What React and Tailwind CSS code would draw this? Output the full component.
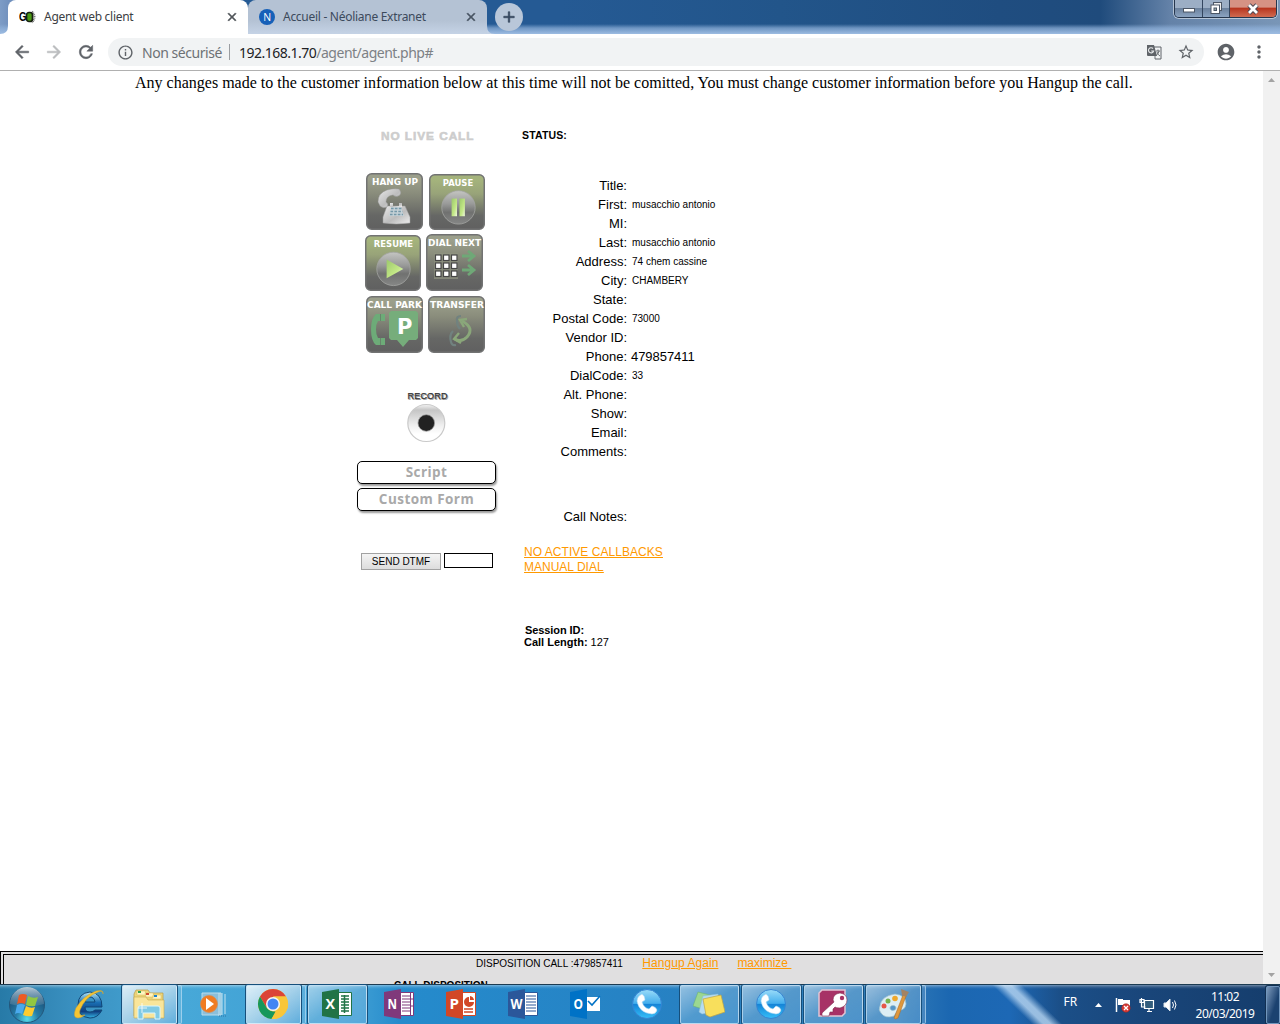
import React from "react";
import {
  MdArrowBack,
  MdArrowForward,
  MdRefresh,
  MdInfoOutline,
  MdStarBorder,
  MdAccountCircle,
  MdMoreVert,
  MdClose,
  MdAdd,
} from "react-icons/md";

function TabFoot({ flip, color }) {
  return (
    <svg className={flip ? "h-2 w-2 -scale-x-100" : "h-2 w-2"} viewBox="0 0 8 8">
      <path d="M8 0V8H0Q8 8 8 0Z" fill={color} />
    </svg>
  );
}

function TranslateIcon() {
  return (
    <svg className="h-[16px] w-[16px]" viewBox="0 0 16 16">
      <path d="M6 3h9v12H9" fill="#f1f3f4" stroke="#5f6368" />
      <path d="M1 1h7l3 11H2a1 1 0 0 1-1-1Z" fill="#5f6368" />
      <path d="M7 4.5A2.6 2.6 0 1 0 7.6 7H5.2" fill="none" stroke="#e8eaec" strokeWidth="1.1" />
      <path d="M10 7h4M12 5.5V7m1 0q-.5 3-2.5 4M11 8q1 3 3 4M9 12v3" fill="none" stroke="#5f6368" strokeWidth=".9" />
    </svg>
  );
}

function WindowControls() {
  return (
    <div className="flex h-[18px] w-[103px] overflow-hidden rounded-b-[5px] border border-t-0 border-[#26364d] shadow-[0_0_0_1px_rgba(255,255,255,0.5)]">
      <div className="flex w-[28px] items-center justify-center border-r border-[#34465f] bg-linear-to-b from-[#9caec5] from-45% via-[#6c829e] via-50% to-[#8ba3c1]">
        <svg className="h-3 w-3" viewBox="0 0 12 12"><rect x=".5" y="5.500" width="11" height="3.500" fill="#fff" stroke="#4c5666" /></svg>
      </div>
      <div className="flex w-[27px] items-center justify-center border-r border-[#34465f] bg-linear-to-b from-[#9caec5] from-45% via-[#6c829e] via-50% to-[#8ba3c1]">
        <svg className="h-[13px] w-[13px]" viewBox="0 0 13 13">
          <rect x="3.500" y=".5" width="8" height="8" fill="#eee" stroke="#4c5666" />
          <rect x="1" y="3" width="8.500" height="8.500" fill="#fff" stroke="#4c5666" />
          <rect x="4" y="6" width="2.500" height="2.500" fill="#9aa" stroke="#4c5666" />
        </svg>
      </div>
      <div className="flex flex-1 items-center justify-center bg-linear-to-b from-[#d69284] from-40% via-[#b83620] via-50% to-[#d06a50]">
        <svg className="h-[12px] w-[14px]" viewBox="0 0 14 12">
          <path d="M3 2l8 8M11 2l-8 8" stroke="#4c4652" strokeWidth="4.600" />
          <path d="M3 2l8 8M11 2l-8 8" stroke="#fff" strokeWidth="2.800" />
        </svg>
      </div>
    </div>
  );
}

function TabStrip() {
  return (
    <div className="flex h-[34px] items-end bg-[linear-gradient(to_bottom,transparent_24px,#8fb1dab0_28px,#9dbce2_34px),linear-gradient(to_right,#7d9cc6_0,#7090bd_10px,#255a94_240px,#255a94_560px,#22558a_780px,#1f4d80_1000px,#1f4b7c_1100px,#6482a8_1170px,#7996b7_1280px)]">
      <TabFoot color="#fff" />
      <div className="flex h-[34px] w-[240px] items-center rounded-t-lg bg-white pr-[9px] pl-[11px]">
        <svg className="h-4 w-[17px]" viewBox="0 0 17 16">
          <path d="M13 2.500q5 5.500 0 11" fill="none" stroke="#777" strokeWidth="2" strokeDasharray="1 .7" />
          <rect x="7.500" y="3.500" width="6" height="9" rx="2.500" fill="#4b9b14" stroke="#172010" strokeWidth="1.700" />
          <text x="0" y="12.300" fontFamily="Liberation Sans" fontWeight="bold" fontSize="12" textLength="7.500" lengthAdjust="spacingAndGlyphs">G</text>
        </svg>
        <span className="ml-[8px] text-[12px] tracking-[-0.28px] text-[#3c4043]">Agent web client</span>
        <MdClose className="ml-auto h-[14px] w-[14px] text-[#4e5257] [&>path:last-child]:stroke-current [&>path:last-child]:stroke-1" />
      </div>
      <div className="flex h-[34px] w-[239px] items-center rounded-t-lg bg-linear-to-b from-[#b4c2d4] from-60% to-[#c5d3e6] pr-[9px] pl-[11px]">
        <svg className="h-4 w-4" viewBox="0 0 16 16">
          <circle cx="8" cy="8" r="8" fill="#1660b8" />
          <text x="4.300" y="11.700" fill="#fff" fontFamily="Open Sans" fontSize="10.500">N</text>
        </svg>
        <span className="ml-[8px] text-[12px] tracking-[-0.28px] text-[#3c4a5c]">Accueil - Néoliane Extranet</span>
        <MdClose className="ml-auto h-[14px] w-[14px] text-[#465261] [&>path:last-child]:stroke-current [&>path:last-child]:stroke-1" />
      </div>
      <TabFoot flip color="#c5d3e6" />
      <div className="mb-[3px] flex h-7 w-7 items-center justify-center rounded-full bg-[#b9c7d9]">
        <MdAdd className="h-[18px] w-[18px] text-[#34465c] [&>path:last-child]:stroke-current [&>path:last-child]:stroke-[0.8]" />
      </div>
      <div className="ml-auto self-start pr-[3px]"><WindowControls /></div>
    </div>
  );
}

function Toolbar() {
  return (
    <div className="flex h-[37px] items-center border-b border-[#b0b0b0] bg-white pl-[12px] text-[#5f6368]">
      <MdArrowBack className="h-5 w-5 [&>path:last-child]:stroke-current [&>path:last-child]:stroke-[0.6]" />
      <MdArrowForward className="ml-[12px] h-5 w-5 text-[#babcbe] [&>path:last-child]:stroke-current [&>path:last-child]:stroke-[0.6]" />
      <MdRefresh className="ml-[12px] h-5 w-5 [&>path:last-child]:stroke-current [&>path:last-child]:stroke-[0.6]" />
      <div className="ml-[12px] flex h-7 w-[1096px] items-center rounded-full bg-[#f1f3f4] pl-[9px]">
        <MdInfoOutline className="h-[17px] w-[17px]" />
        <span className="ml-[8px] text-[14px] tracking-[-0.45px] text-[#6d7175]">Non sécurisé</span>
        <span className="ml-[7px] h-4 w-px bg-[#9a9da1]" />
        <span className="ml-[9px] text-[14px] tracking-[-0.5px] text-[#7d8185]"><span className="text-[#202124]">192.168.1.70</span>/agent/agent.php#</span>
        <div className="ml-auto flex items-center gap-[15px] pr-[9px]">
          <TranslateIcon />
          <MdStarBorder className="h-[18px] w-[18px]" />
        </div>
      </div>
      <MdAccountCircle className="ml-[12px] h-5 w-5" />
      <MdMoreVert className="ml-[13px] h-5 w-5" />
    </div>
  );
}

function PadButton({ label, top = 12, x = 5, width, green, children }) {
  const id = "pad" + label.replace(" ", "");
  return (
    <svg className={green ? "mt-px h-[56px] w-[56px] shrink-0" : "h-[57px] w-[57px] shrink-0"} viewBox="0 0 57 57">
      <defs>
        <linearGradient id={id} x1="0" y1="0" x2="0" y2="1">
          <stop offset=".1" stopColor={green ? "#a4b37c" : "#9b9f8b"} />
          <stop offset=".35" stopColor={green ? "#98a379" : "#8a8d7c"} />
          <stop offset=".75" stopColor="#666765" />
          <stop offset="1" stopColor="#606060" />
        </linearGradient>
        <linearGradient id={id + "ball"} x1="0" y1="0" x2="0" y2="1">
          <stop offset="0" stopColor="#c4c5c2" />
          <stop offset=".4" stopColor="#989998" />
          <stop offset=".65" stopColor="#707170" />
          <stop offset="1" stopColor="#868786" />
        </linearGradient>
        <linearGradient id={id + "lime"} x1="0" y1="0" x2="1" y2="1">
          <stop offset="0" stopColor="#9cc86c" />
          <stop offset=".6" stopColor="#c3e886" />
          <stop offset="1" stopColor="#eef8dc" />
        </linearGradient>
        <linearGradient id={id + "silver"} x1="0" y1="0" x2="1" y2="1">
          <stop offset="0" stopColor="#e9e9e9" />
          <stop offset=".55" stopColor="#bdbdbd" />
          <stop offset="1" stopColor="#efefef" />
        </linearGradient>
      </defs>
      <rect x=".75" y=".75" width="55.500" height="55.500" rx="5" fill={`url(#${id})`} stroke="#727373" strokeWidth="1.500" />
      {children(id)}
      <text x={x} y={top} fill="#fff" fontFamily="DejaVu Sans" fontWeight="bold" fontSize="9.300" textLength={width} lengthAdjust="spacingAndGlyphs">{label}</text>
    </svg>
  );
}

function ControlPad() {
  return (
    <div className="mt-[29px] flex flex-col">
      <div className="flex gap-[6px] pl-[9px]">
        <PadButton label="HANG UP" x={6} width={46}>
          {(id) => (
            <g fill={`url(#${id}silver)`}>
              <path d="M21 33h18l5 11v6q-14 2-27 0v-6Z" stroke="#9c9c9c" strokeWidth=".5" />
              <path d="M24 34v-4h3v3h6v-3h3v4Z" />
              <path d="M12 29q0-9 9-12 7-2 12-1 3 3 1 6-4 3-7 0-7 1-7 7 3 2 1 5-4 2-7-1Z" stroke="#8f8f8f" strokeWidth=".4" />
              <path d="M25 34h10l3 9H23Z" fill="#c6d2d7" />
              <path d="M25 35.500h11M24.500 38.500h12M24 41.500h13" stroke="#7598a8" strokeWidth="1.500" strokeDasharray="2.600 1.300" />
            </g>
          )}
        </PadButton>
        <PadButton label="PAUSE" x={14} width={31} green>
          {(id) => (
            <g>
              <circle cx="30" cy="34" r="17" fill={`url(#${id}ball)`} stroke="#a3a4a2" strokeWidth=".8" />
              <rect x="23" y="25" width="5.500" height="18" fill={`url(#${id}lime)`} />
              <rect x="31" y="25" width="5.500" height="18" fill={`url(#${id}lime)`} />
            </g>
          )}
        </PadButton>
      </div>
      <div className="mt-[4px] flex gap-[5px] pl-[8px]">
        <PadButton label="RESUME" x={9} width={40} green>
          {(id) => (
            <g>
              <circle cx="29" cy="34.500" r="17" fill={`url(#${id}ball)`} stroke="#a3a4a2" strokeWidth=".8" />
              <path d="M22 25v19l17-9.500Z" fill={`url(#${id}lime)`} />
            </g>
          )}
        </PadButton>
        <PadButton label="DIAL NEXT" x={2} width={53}>
          {() => (
            <g>
              <rect x="8" y="19" width="24" height="26" fill="#929681" opacity=".7" />
              {[21, 29, 37].map((y) => [9.5, 17.5, 25.5].map((x) => (
                <rect key={`${x}-${y}`} x={x} y={y} width="5.500" height="5.500" fill="#fff" stroke="#464646" strokeWidth="1.200" />
              )))}
              <path d="M36 22h11m-5-5 6 5-6 5M36 36h11m-5-5 6 5-6 5" fill="none" stroke="#6fa877" strokeWidth="2.800" />
            </g>
          )}
        </PadButton>
      </div>
      <div className="mt-[5px] flex gap-[5px] pl-[9px]">
        <PadButton label="CALL PARK" x={1} width={55}>
          {() => (
            <g>
              <path d="M19 18v7h-7q-2 3-2 8.500t2 8.500h7v7h-9Q5 45 5 33.500T10 18Z" fill="#6dab78" />
              <path d="M14.500 18v7M14.500 42v7" stroke="#647466" strokeWidth=".7" />
              <path d="M25 15h25l2 2v25l-2 2h-7l-6 7-6-7h-6l-2-2V17Z" fill="#76ad7b" />
              <text x="31" y="37.500" fill="#fff" fontFamily="DejaVu Sans" fontWeight="bold" fontSize="21">P</text>
            </g>
          )}
        </PadButton>
        <PadButton label="TRANSFER" x={2} width={54}>
          {() => (
            <g fill="none" strokeWidth="2.400">
              <path d="M33 20q-5 0-4 5 0 5 3 8" stroke="#71827f" strokeWidth="2.200" />
              <path d="M34 25q13 7 5 16-6 6-12 2" stroke="#8aa77a" strokeWidth="3" />
              <path d="M39 23l-7 1 4 7M31 37l-5 6 7 4" stroke="#8aa77a" />
              <path d="M25 35q-4 4-2 11 1 4 5 3" stroke="#71827f" strokeWidth="2.200" />
            </g>
          )}
        </PadButton>
      </div>
    </div>
  );
}

function RecordButton() {
  return (
    <svg className="mt-[37px] ml-[45px] h-[54px] w-[52px]" viewBox="0 0 52 54">
      <defs>
        <linearGradient id="recordShine" x1="0" y1="0" x2="0" y2="1">
          <stop offset="0" stopColor="#f4f4f4" /><stop offset=".15" stopColor="#c5c5c5" /><stop offset=".55" stopColor="#eee" /><stop offset=".8" stopColor="#fff" />
        </linearGradient>
      </defs>
      <text x="6.500" y="9.700" fill="#aaa" fontFamily="Liberation Sans" fontWeight="bold" fontSize="9" textLength="40">RECORD</text>
      <text x="5.500" y="8.700" fill="#343434" stroke="#343434" strokeWidth=".25" fontFamily="Liberation Sans" fontSize="9" textLength="40">RECORD</text>
      <circle cx="24.300" cy="33" r="18.500" fill="url(#recordShine)" stroke="#c9c9c9" strokeWidth="1.200" />
      <circle cx="24.300" cy="33" r="8.300" fill="#222" stroke="#999" strokeWidth=".7" />
    </svg>
  );
}

function FormButton({ children }) {
  return (
    <div className="flex h-[23px] w-[139px] items-center justify-center rounded-[5px] border border-black bg-white shadow-[1px_2px_2px_rgba(0,0,0,0.4)]">
      <span className="pt-px font-['Open_Sans'] text-[13.5px] leading-none font-bold tracking-[0.45px] text-[#a9a9a9]">{children}</span>
    </div>
  );
}

const fields = [
  ["Title:"],
  ["First:", "musacchio antonio"],
  ["MI:"],
  ["Last:", "musacchio antonio"],
  ["Address:", "74 chem cassine"],
  ["City:", "CHAMBERY"],
  ["State:"],
  ["Postal Code:", "73000"],
  ["Vendor ID:"],
  ["Phone:", "479857411"],
  ["DialCode:", "33"],
  ["Alt. Phone:"],
  ["Show:"],
  ["Email:"],
  ["Comments:"],
];

function CustomerPanel() {
  return (
    <div className="ml-[25px] flex flex-col font-['Liberation_Sans'] text-[13px] text-black">
      <div className="pt-[3px] text-[10.5px] leading-3 font-bold tracking-[0.15px]">STATUS:</div>
      <div className="mt-[35px]">
        {fields.map(([label, value]) => (
          <div key={label} className="flex h-[19px] items-center">
            <span className="w-[105px] text-right">{label}</span>
            <span className={label === "Phone:" ? "ml-[4px] tracking-[-0.05px]" : "ml-[5px] text-[10px]"}>{value}</span>
          </div>
        ))}
      </div>
      <div className="mt-[46px] flex h-[19px] w-[105px] items-center justify-end">Call Notes:</div>
      <div className="mt-[19px] ml-[2px] flex flex-col items-start text-[12px] leading-[15px] text-[#ff9900] underline">
        <a className="tracking-[0.04px]">NO ACTIVE CALLBACKS</a>
        <a>MANUAL DIAL</a>
      </div>
      <div className="mt-[49px] ml-[2px] text-[11px] leading-3">
        <div className="ml-px font-bold tracking-[-0.08px]">Session ID:</div>
        <div><b>Call Length:</b> 127</div>
      </div>
    </div>
  );
}

function PageBody() {
  return (
    <div className="flex h-[913px] bg-white">
      <main className="flex w-[1263px] flex-col overflow-hidden">
        <p className="h-[55px] shrink-0 pl-[135px] font-['Liberation_Serif'] text-[16px] leading-[24px] tracking-[0.007px] whitespace-nowrap text-black">Any changes made to the customer information below at this time will not be comitted, You must change customer information before you Hangup the call.</p>
        <div className="flex h-[825px] shrink-0 pl-[357px]">
          <div className="flex w-[140px] flex-col">
            <svg className="mt-[2px] ml-[22px] h-4 w-[98px]" viewBox="0 0 98 16">
              <text x="2" y="11.800" fill="#cdcdcd" stroke="#cdcdcd" strokeWidth=".6" fontFamily="Liberation Sans" fontWeight="bold" fontSize="11.800" textLength="92.500">NO LIVE CALL</text>
            </svg>
            <ControlPad />
            <RecordButton />
            <div className="mt-[17px] flex flex-col gap-[4px]">
              <FormButton>Script</FormButton>
              <FormButton>Custom Form</FormButton>
            </div>
            <div className="mt-[42px] flex items-start gap-[3px] pl-[4px]">
              <button className="h-[17px] w-[80px] border border-[#a2a2a2] bg-linear-to-b from-[#f4f4f4] to-[#dddddd] pt-px font-['Liberation_Sans'] text-[10px] leading-none text-black">SEND DTMF</button>
              <span className="h-[15px] w-[49px] border border-black bg-white" />
            </div>
          </div>
          <CustomerPanel />
        </div>
        <section className="flex h-[60px] shrink-0 flex-col border-4 border-r-0 border-double border-black bg-[#e0dfe0] font-['Liberation_Sans']">
          <div className="flex h-[17px] shrink-0 items-center pl-[472px]">
            <span className="text-[10px] text-black">DISPOSITION CALL :479857411</span>
            <a className="mb-px ml-[19.5px] text-[12px] tracking-[0.06px] text-[#ff9900] underline">Hangup Again</a>
            <a className="mb-px ml-[19px] text-[12px] whitespace-pre text-[#ff9900] underline">maximize </a>
          </div>
          <div className="mt-[8px] pl-[390px] text-[10px] leading-3 font-bold text-black">CALL DISPOSITION</div>
        </section>
      </main>
      <aside className="flex w-[17px] flex-col items-center justify-between bg-[#f1f1f1] pt-[7px] pb-[7px]">
        <svg className="h-1 w-[7px]" viewBox="0 0 7 4"><path d="M0 4 3.500 0 7 4Z" fill="#a3a3a3" /></svg>
        <svg className="h-1 w-[7px]" viewBox="0 0 7 4"><path d="M0 0h7L3.500 4Z" fill="#a3a3a3" /></svg>
      </aside>
    </div>
  );
}

function StartOrb() {
  return (
    <svg className="h-[38px] w-[38px]" viewBox="0 0 38 38">
      <defs>
        <radialGradient id="orb" cx=".5" cy=".9" r=".8"><stop offset="0" stopColor="#55ddeb" /><stop offset=".4" stopColor="#277da7" /><stop offset="1" stopColor="#174a73" /></radialGradient>
        <linearGradient id="orbShine" x1="0" y1="0" x2="0" y2="1"><stop offset="0" stopColor="#dfebf1" stopOpacity=".8" /><stop offset="1" stopColor="#8aa5b8" stopOpacity=".2" /></linearGradient>
      </defs>
      <circle cx="19" cy="19" r="17.500" fill="url(#orb)" stroke="#24577b" />
      <path d="M2 18a17 17 0 0 1 34 0q-17 5-34 0Z" fill="url(#orbShine)" />
      <path d="M11 9q4-2 8 0l-2 9q-4-2-8 0Z" fill="#ee5b22" />
      <path d="M20 10q5 3 10 1l-3 9q-5 1-9-1Z" fill="#91c741" />
      <path d="M9 19q4-2 8 0l-3 9q-4-2-7 0Z" fill="#4aa9ec" />
      <path d="M18 20q5 3 9 1l-3 9q-5 1-9-1Z" fill="#fdcc2f" />
    </svg>
  );
}

function InternetExplorer() {
  return (
    <svg className="h-8 w-8" viewBox="0 0 32 32">
      <defs><linearGradient id="ie" x1="0" y1="0" x2="0" y2="1"><stop stopColor="#b5e7f5" /><stop offset=".4" stopColor="#1a6fb4" /><stop offset=".75" stopColor="#103f80" /><stop offset="1" stopColor="#35b7e6" /></linearGradient></defs>
      <path d="M29 19H12q0 5 5 5 3 0 5-2h7q-4 8-12 8Q5 29 5 17T17 4q12 1 12 15ZM12 14h10q-1-5-5-5t-5 5Z" fill="url(#ie)" stroke="#104777" strokeWidth="1" />
      <path d="M30 6q1-5-7-3Q10 8 3 20q-4 10 2 10 3 0 7-3-7 2-5-5Q12 9 25 4q5-2 5 2Z" fill="#f5c532" stroke="#d0a02f" strokeWidth=".5" />
    </svg>
  );
}

function Explorer() {
  return (
    <svg className="h-8 w-8" viewBox="0 0 32 32">
      <path d="M1 6 3 2h12l2 3h13v23H1Z" fill="#edd67b" stroke="#b99b46" strokeWidth=".7" />
      <path d="M4 3h8l1 4H4ZM12 5h8l1 4h-8ZM20 7h8v4h-9Z" fill="#fff5c1" stroke="#d4b85d" strokeWidth=".5" />
      <path d="M5 3h3v2H5Z" fill="#2aa24b" /><path d="M13 5h3v2h-3Z" fill="#d04a2f" /><path d="M21 7h3v2h-3Z" fill="#1b83cf" />
      <path d="M1 9h12l2 3h16v18H1Z" fill="#f9e59a" stroke="#c7a94f" strokeWidth=".6" />
      <path d="M5 31V20q0-2 2-2h18q2 0 2 2v11h-5v-6H10v6Z" fill="#80cae4" stroke="#d9f6ff" />
      <path d="M9 15v10M5 20h9" stroke="#fff" strokeWidth=".8" />
    </svg>
  );
}

function MediaPlayer() {
  return (
    <svg className="h-8 w-8" viewBox="0 0 32 32">
      <path d="M5 5h19v22H5Z" fill="#8bbfda" stroke="#b8ddec" />
      <path d="M22 5v23M25 5v22M28 6v20" stroke="#c4e3f1" /><path d="M22 28h8" stroke="#3074a6" strokeDasharray="1 1" />
      <circle cx="12" cy="16" r="8.500" fill="#f07c22" stroke="#d78a51" strokeWidth=".7" /><path d="M9 10v12l8-6Z" fill="#fff" />
    </svg>
  );
}

function Chrome() {
  return (
    <svg className="h-8 w-8" viewBox="0 0 32 32">
      <circle cx="16" cy="16" r="15" fill="#f8c63a" />
      <path d="M16 16 9.500 19.500 3 8.500A15 15 0 0 1 29 8.500H16Z" fill="#db4437" />
      <path d="M3 8.500 9.500 19.500Q12 23 16 23.500l2.500 0L14.500 31A15 15 0 0 1 3 8.500Z" fill="#16975b" />
      <path d="M29 8.500H16q7 1 7 8 0 3-2 5L14.500 31A15 15 0 0 0 29 8.500Z" fill="#f8c63a" />
      <circle cx="16" cy="16" r="7" fill="#f4f5f5" /><circle cx="16" cy="16" r="5.500" fill="#4285f4" />
    </svg>
  );
}

function OfficeIcon({ letter, color, kind, x = 4.5 }) {
  return (
    <svg className="h-8 w-8" viewBox="0 0 32 32">
      {kind === "mail" ? (
        <g><path d="M18 9h13v14H18Z" fill="#fff" /><path d="m19 13 4 4 8-9" fill="none" stroke={color} strokeWidth="1.600" /></g>
      ) : (
        <g>
          <path d="M17 4.500h13.500v23H17Z" fill="#fff" stroke={color} />
          {kind === "grid" && <path d="M20 8h8M20 11h8M20 14h8M20 17h8M20 20h8M20 23h8M23.500 7v18" stroke={color} strokeWidth="1.500" />}
          {kind === "lines" && <path d="M19 8h10M19 11h10M19 14h10M19 17h10M19 20h10M19 23h10" stroke={color} strokeWidth="1.200" />}
          {kind === "note" && <g><path d="M19 8h8M19 11h8M19 14h8M19 17h8M19 20h8M19 23h8" stroke={color} strokeWidth="1.200" /><path d="M27.500 5v22M28 11h3M28 18h3" fill="none" stroke={color} /></g>}
          {kind === "chart" && <g><path d="M24 9a5 5 0 1 0 5 5h-5Z" fill={color} /><path d="M25 8a5 5 0 0 1 4 4h-4Z" fill={color} /><path d="M19 21h9M19 24h9" stroke={color} strokeWidth="1.500" /></g>}
        </g>
      )}
      <path d="M1 4 18 1v30L1 28Z" fill={color} />
      <text x={x} y="21" fill="#fff" fontFamily="Open Sans" fontWeight="bold" fontSize="14.500" textLength={letter === "W" ? 12 : 9.5} lengthAdjust="spacingAndGlyphs">{letter}</text>
    </svg>
  );
}

function PhoneIcon() {
  return (
    <svg className="h-8 w-8" viewBox="0 0 32 32">
      <defs><linearGradient id="phoneBlue" x1="0" y1="0" x2="0" y2="1"><stop stopColor="#9bdcf9" /><stop offset=".48" stopColor="#43aeed" /><stop offset=".5" stopColor="#1483d6" /><stop offset="1" stopColor="#36bff8" /></linearGradient></defs>
      <circle cx="16" cy="16" r="14.500" fill="url(#phoneBlue)" stroke="#3785d2" />
      <path d="m8 8 3-2q3 2 3 6l-3 2q2 6 7 7l3-3q4 1 5 4-1 4-5 4Q8 25 6 13q0-3 2-5Z" fill="#fff" stroke="#b0d9f1" strokeWidth=".6" />
    </svg>
  );
}

function StickyNotes() {
  return (
    <svg className="h-8 w-8" viewBox="0 0 32 32">
      <path d="m5 4 16 4-5 15L0 18Z" fill="#9bd791" stroke="#69af68" strokeWidth=".5" />
      <path d="m10 8 15-2 2 17-18 3-3-2Z" fill="#b5dcf1" stroke="#89bad8" strokeWidth=".5" />
      <path d="m10 11 18-4 4 17-15 5-4-2Z" fill="#f8df5c" stroke="#bda547" strokeWidth=".7" />
    </svg>
  );
}

function AccessIcon() {
  return (
    <svg className="h-8 w-8" viewBox="0 0 32 32">
      <path d="M5 2h23v23l-3 3H2V5Z" fill="#a73266" stroke="#e4c5d3" strokeWidth="1.500" />
      <path d="M16 12q0-6 7-7 7 1 7 7t-7 8q-4 0-5-1l-2 2v3h-3l-1 4H5v-3l12-11Z" fill="#fff" stroke="#812c51" strokeWidth=".6" /><circle cx="25" cy="10" r="2.200" fill="#a73266" />
    </svg>
  );
}

function PaintIcon() {
  return (
    <svg className="h-8 w-8" viewBox="0 0 32 32">
      <path d="M3 18Q4 8 18 6q11 1 11 10-1 7-8 6l-4 6q-9 3-13-3-3-3-1-7Zm10 2a3 2.500 0 1 0 0-.1Z" fill="#dceef4" stroke="#9bbecc" strokeWidth=".7" fillRule="evenodd" />
      <circle cx="7" cy="18" r="2.500" fill="#e65649" /><circle cx="11" cy="13" r="2.500" fill="#77b34e" /><circle cx="18" cy="10.500" r="2.800" fill="#eea82d" />
      <path d="m17 30 9-23 3 1-8 22q-3 2-4 0Z" fill="#df983c" stroke="#ad6922" strokeWidth=".5" /><path d="m25 7-1-6 8 3-3 5Z" fill="#a38363" />
    </svg>
  );
}

function TaskItem({ open, stack, bright, children }) {
  const shade = bright
    ? "bg-linear-to-br from-[#ffffffd0] via-[#c5e0f0c0] to-[#6db3dfb0]"
    : "bg-linear-to-br from-[#ffffff80] via-[#a5cee955] to-[#8dc5ee50]";
  return (
    <div className="flex h-10 w-[62px] shrink-0 pl-px">
      <div className={(stack ? "w-[55px] " : "w-[59px] ") + "flex h-[39px] items-center justify-center pr-[2px] pb-[2px] " + (open ? "rounded-[2px] border border-[#d4e8f6b0] shadow-[0_0_0_1px_#164f7b] " + shade : "")}>{children}</div>
      {stack && open && <div className="ml-[1px] h-[39px] w-[4px] rounded-r-[2px] border border-l-0 border-[#c0dff5a0] bg-[#ffffff25]" />}
    </div>
  );
}

function Tray() {
  return (
    <div className="ml-auto flex h-10 items-center text-white">
      <span className="mb-[6px] text-[12px] tracking-[-0.1px]">FR</span>
      <svg className="ml-[18px] h-1 w-[7px]" viewBox="0 0 7 4"><path d="M0 4 3.500 0 7 4Z" fill="#fff" /></svg>
      <svg className="ml-[13px] h-4 w-4" viewBox="0 0 16 16">
        <path d="M1.500 1v14" stroke="#fff" strokeWidth="1.500" /><path d="M3 2h5v1h7v6H8V8H3Z" fill="#fff" />
        <circle cx="11" cy="11" r="4.300" fill="#d83a34" stroke="#8f2928" strokeWidth=".5" /><path d="m9 9 4 4m0-4-4 4" stroke="#fff" strokeWidth="1.300" />
      </svg>
      <svg className="ml-[8px] h-4 w-4" viewBox="0 0 16 16">
        <path d="M5.500 3.500h9v8h-9ZM8 14.500h5M10 12v2M2.500 1v9h4M1 2.500h4v3H1Z" fill="#335d7c" stroke="#fff" strokeWidth="1.200" />
      </svg>
      <svg className="ml-[8px] h-4 w-4" viewBox="0 0 16 16">
        <path d="M1 6h2l4-4v12l-4-4H1Z" fill="#fff" stroke="#dce5ec" /><path d="M9.500 5q2 3 0 6M11.500 3.500q3 4.500 0 9" fill="none" stroke="#fff" />
      </svg>
      <div className="ml-[16px] w-[60px] text-center text-[12px] leading-[17px] tracking-[-0.5px] whitespace-nowrap"><div>11:02</div><div>20/03/2019</div></div>
      <div className="ml-[11px] h-[38px] w-[14px] rounded-[2px] border border-[#7196bd] bg-linear-to-br from-[#7d9abb] to-[#1b4270] to-60% shadow-[0_0_0_1px_#112f52]" />
    </div>
  );
}

function Taskbar() {
  return (
    <footer className="flex h-10 items-start border-t border-[#1c3b52] bg-[linear-gradient(to_bottom,#ffffff60_0,#ffffff20_2px,transparent_4px),linear-gradient(44deg,transparent_717px,#b9d7f2cc_725px,#b9d7f2cc_730px,transparent_738px),linear-gradient(to_right,#277aa7_0,#398fbf_70px,#47a8d8_185px,#3d9dd3_360px,#258bcc_400px,#2682c4_650px,#317bb8_900px,#1b67b1_950px,#1d68b5_1010px,#1b4f88_1060px,#194579_1150px,#153d6c_1280px)]">
      <div className="flex h-10 w-[59px] items-center pb-px pl-[8px]"><StartOrb /></div>
      <TaskItem><InternetExplorer /></TaskItem>
      <TaskItem open stack bright><Explorer /></TaskItem>
      <TaskItem><MediaPlayer /></TaskItem>
      <TaskItem open stack bright><Chrome /></TaskItem>
      <TaskItem open><OfficeIcon letter="X" color="#217346" kind="grid" /></TaskItem>
      <TaskItem><OfficeIcon letter="N" color="#80397b" kind="note" /></TaskItem>
      <TaskItem><OfficeIcon letter="P" color="#d24726" kind="chart" /></TaskItem>
      <TaskItem><OfficeIcon letter="W" color="#2b579a" kind="lines" x={3.5} /></TaskItem>
      <TaskItem><OfficeIcon letter="O" color="#0072c6" kind="mail" /></TaskItem>
      <TaskItem><PhoneIcon /></TaskItem>
      <TaskItem open><StickyNotes /></TaskItem>
      <TaskItem open><PhoneIcon /></TaskItem>
      <TaskItem open><AccessIcon /></TaskItem>
      <TaskItem open stack><PaintIcon /></TaskItem>
      <Tray />
    </footer>
  );
}

export default function App() {
  return (
    <div className="flex h-[1024px] w-[1280px] flex-col overflow-hidden bg-white font-['Noto_Sans',sans-serif]">
      <TabStrip />
      <Toolbar />
      <PageBody />
      <Taskbar />
    </div>
  );
}
